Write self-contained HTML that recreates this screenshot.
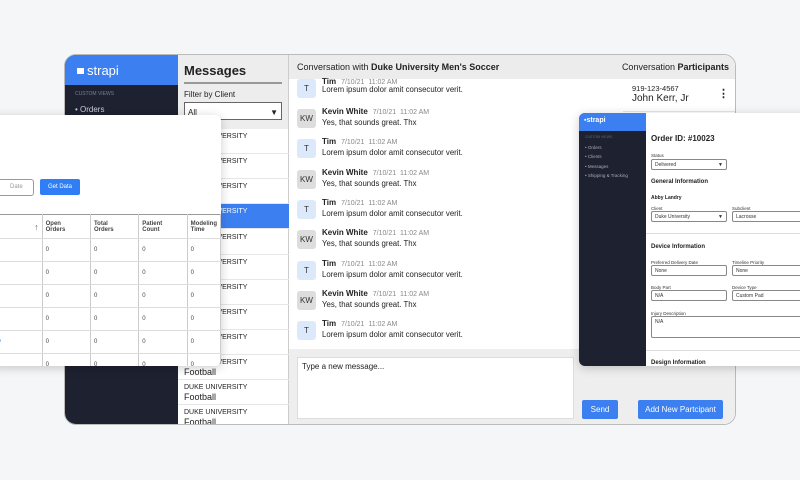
<!DOCTYPE html>
<html><head><style>
*{box-sizing:border-box;margin:0;padding:0}
body{width:800px;height:480px;background:#f5f6f8;font-family:"Liberation Sans",sans-serif;position:relative;overflow:hidden;color:#222}
.abs{position:absolute}
.win{left:64px;top:54px;width:672px;height:371px;border:1px solid #bbb;border-radius:12px;overflow:hidden;background:#fff}
.side{left:0;top:0;width:113px;height:371px;background:#1e2130}
.side .logo{height:30px;background:#3b7ff0;color:#fff;font-size:13px;padding:8px 12px}
.msgs{left:113px;top:0;width:111px;height:371px;background:#fff;border-right:1px solid #ccc}
.it{position:absolute;left:0;width:111px;height:25px;border-bottom:1px solid #e6e6e6;padding:3px 6px;font-size:7px;line-height:9px}
.it b{display:block;font-weight:normal;font-size:9px;line-height:11px}
.conv{left:224px;top:0;width:448px;height:371px;background:#fff}
.m{position:absolute;left:8px;font-size:8px}
.av{position:absolute;left:0;top:0;width:19px;height:19px;border-radius:3px;font-size:8px;text-align:center;line-height:19px}
.t{background:#dbe9fb;color:#333}.k{background:#ddd;color:#333}
.m .n{position:absolute;left:25px;top:-2px;white-space:nowrap;font-size:8px}
.m .n span{color:#888;font-size:7px;margin-left:5px}
.m .x{position:absolute;left:25px;top:9px;white-space:nowrap;font-size:7.8px}
.card{background:#fff;box-shadow:0 2px 10px rgba(0,0,0,.2);border-radius:6px;overflow:hidden}
td{border-right:1px solid #ccc;border-bottom:1px solid #ddd;font-size:6px;padding:0 3px;color:#444}
.in{position:absolute;border:1px solid #888;border-radius:2px;height:11px;font-size:5px;padding:2px 3px;color:#333}
.lb{position:absolute;font-size:4.5px;color:#333}
.sq{display:inline-block;width:7px;height:6px;background:#fff;margin-right:3px;vertical-align:1px}
</style></head><body>
<div class="abs win">
 <div class="abs side"><div class="logo"><span class="sq"></span>strapi</div>
  <div style="color:#7a7f8e;font-size:5px;padding:6px 10px">CUSTOM VIEWS</div>
  <div style="color:#ccd;font-size:8px;padding:2px 10px">• Orders</div></div>
 <div class="abs msgs">
  <div style="background:#ededed;height:74px;padding:8px 6px">
   <div style="font-size:13px;font-weight:bold;border-bottom:2px solid #999;padding-bottom:4px">Messages</div>
   <div style="font-size:8px;margin-top:6px">Filter by Client</div>
   <div style="background:#fff;border:1px solid #666;height:18px;margin-top:3px;font-size:8px;padding:5px 3px">All<span style="float:right">▼</span></div>
  </div>
  <div class="it" style="top:74px">DUKE UNIVERSITY<b>Soccer</b></div>
  <div class="it" style="top:99px">DUKE UNIVERSITY<b>Soccer</b></div>
  <div class="it" style="top:124px">DUKE UNIVERSITY<b>Soccer</b></div>
  <div class="it" style="top:149px;background:#3b7ff0;color:#fff">DUKE UNIVERSITY<b>Soccer</b></div>
  <div class="it" style="top:175px">DUKE UNIVERSITY<b>Hockey</b></div>
  <div class="it" style="top:200px">DUKE UNIVERSITY<b>Football</b></div>
  <div class="it" style="top:225px">DUKE UNIVERSITY<b>Football</b></div>
  <div class="it" style="top:250px">DUKE UNIVERSITY<b>Football</b></div>
  <div class="it" style="top:275px">DUKE UNIVERSITY<b>Football</b></div>
  <div class="it" style="top:300px">DUKE UNIVERSITY<b>Football</b></div>
  <div class="it" style="top:325px">DUKE UNIVERSITY<b>Football</b></div>
  <div class="it" style="top:350px">DUKE UNIVERSITY<b>Football</b></div>
 </div>
 <div class="abs conv">
  <div style="height:24px;background:#ececec;font-size:9px;padding:7px 8px">Conversation with <b>Duke University Men's Soccer</b><span style="float:right">Conversation <b>Participants</b></span></div>
  <div class="m" style="top:24px"><div class="av t">T</div><div class="n"><b>Tim</b><span>7/10/21 &nbsp;11:02 AM</span></div><div class="x" style="top:6px">Lorem ipsum dolor amit consecutor verit.</div></div>
  <div class="m" style="top:54px"><div class="av k">KW</div><div class="n"><b>Kevin White</b><span>7/10/21 &nbsp;11:02 AM</span></div><div class="x">Yes, that sounds great. Thx</div></div>
  <div class="m" style="top:84px"><div class="av t">T</div><div class="n"><b>Tim</b><span>7/10/21 &nbsp;11:02 AM</span></div><div class="x">Lorem ipsum dolor amit consecutor verit.</div></div>
  <div class="m" style="top:115px"><div class="av k">KW</div><div class="n"><b>Kevin White</b><span>7/10/21 &nbsp;11:02 AM</span></div><div class="x">Yes, that sounds great. Thx</div></div>
  <div class="m" style="top:145px"><div class="av t">T</div><div class="n"><b>Tim</b><span>7/10/21 &nbsp;11:02 AM</span></div><div class="x">Lorem ipsum dolor amit consecutor verit.</div></div>
  <div class="m" style="top:175px"><div class="av k">KW</div><div class="n"><b>Kevin White</b><span>7/10/21 &nbsp;11:02 AM</span></div><div class="x">Yes, that sounds great. Thx</div></div>
  <div class="m" style="top:206px"><div class="av t">T</div><div class="n"><b>Tim</b><span>7/10/21 &nbsp;11:02 AM</span></div><div class="x">Lorem ipsum dolor amit consecutor verit.</div></div>
  <div class="m" style="top:236px"><div class="av k">KW</div><div class="n"><b>Kevin White</b><span>7/10/21 &nbsp;11:02 AM</span></div><div class="x">Yes, that sounds great. Thx</div></div>
  <div class="m" style="top:266px"><div class="av t">T</div><div class="n"><b>Tim</b><span>7/10/21 &nbsp;11:02 AM</span></div><div class="x">Lorem ipsum dolor amit consecutor verit.</div></div>
  <div class="abs" style="left:334px;top:24px;width:114px;height:270px;background:#fff">
   <div style="font-size:7.5px;padding:5px 9px;border-bottom:1px solid #e6e6e6;height:33px">919-123-4567<br><span style="font-size:10px">John Kerr, Jr</span><span style="position:absolute;right:8px;top:8px;font-weight:bold;font-size:11px">⋮</span></div>
   <div style="font-size:7.5px;padding:4px 9px">919-123-4567</div>
  </div>
  <div class="abs" style="left:0;top:294px;width:448px;height:77px;background:#eee"></div>
  <div class="abs" style="left:8px;top:302px;width:277px;height:62px;background:#fff;border:1px solid #ddd;font-size:8px;padding:4px">Type a new message...</div>
  <div class="abs" style="left:293px;top:345px;width:36px;height:19px;background:#3b7ff0;color:#fff;font-size:8px;text-align:center;line-height:19px;border-radius:2px">Send</div>
  <div class="abs" style="left:349px;top:345px;width:85px;height:19px;background:#3b7ff0;color:#fff;font-size:8px;text-align:center;line-height:19px;border-radius:2px">Add New Partcipant</div>
 </div>
</div>

<!-- left overlay -->
<div class="abs card" style="left:-8px;top:115px;width:229px;height:251px">
 <div class="abs" style="left:0;top:64px;width:42px;height:17px;border:1px solid #999;border-radius:3px;font-size:6px;color:#999;padding:4px 8px 0 17px">Date</div>
 <div class="abs" style="left:48px;top:64px;width:40px;height:16px;background:#2f7ef5;border-radius:2px;color:#fff;font-size:6px;text-align:center;line-height:16px">Get Data</div>
 <table class="abs" style="left:0;top:99px;width:229px;border-collapse:collapse;border-top:1px solid #999">
  <tr style="height:24px;border-bottom:1px solid #999"><td style="width:53px;text-align:right;font-size:9px;color:#666">↑</td><td style="width:50px"><b>Open<br>Orders</b></td><td style="width:50px"><b>Total<br>Orders</b></td><td style="width:50px"><b>Patient<br>Count</b></td><td><b>Modeling<br>Time</b></td></tr>
  <tr style="height:23px"><td></td><td>0</td><td>0</td><td>0</td><td>0</td></tr>
  <tr style="height:23px"><td></td><td>0</td><td>0</td><td>0</td><td>0</td></tr>
  <tr style="height:23px"><td></td><td>0</td><td>0</td><td>0</td><td>0</td></tr>
  <tr style="height:23px"><td></td><td>0</td><td>0</td><td>0</td><td>0</td></tr>
  <tr style="height:23px"><td style="color:#2f7ef5">ity</td><td>0</td><td>0</td><td>0</td><td>0</td></tr>
  <tr style="height:23px"><td></td><td>0</td><td>0</td><td>0</td><td>0</td></tr>
 </table>
</div>

<!-- right overlay -->
<div class="abs card" style="left:579px;top:113px;width:230px;height:253px">
 <div class="abs" style="left:0;top:0;width:67px;height:253px;background:#1e2130">
  <div style="height:18px;background:#3b7ff0;color:#fff;font-size:7px;font-weight:bold;padding:4px 5px">▪strapi</div>
  <div style="font-size:3.5px;color:#666;padding:4px 6px">CUSTOM VIEWS</div>
  <div style="font-size:4.5px;color:#aab;padding:0 6px;line-height:9.3px">• Orders<br>• Clients<br>• Messages<br>• Shipping &amp; Tracking</div>
 </div>
 <div class="abs" style="left:72px;top:21px;font-size:8px;font-weight:bold">Order ID: #10023</div>
 <div class="lb" style="left:72px;top:40px">Status</div>
 <div class="in" style="left:72px;top:46px;width:76px">Delivered<span style="float:right">▼</span></div>
 <div class="abs" style="left:72px;top:66px;font-size:6px;font-weight:bold">General Information</div>
 <div class="abs" style="left:72px;top:82px;font-size:5px;font-weight:bold">Abby Landry</div>
 <div class="lb" style="left:72px;top:93px">Client</div>
 <div class="in" style="left:72px;top:98px;width:76px">Duke University<span style="float:right">▼</span></div>
 <div class="lb" style="left:153px;top:93px">Subclient</div>
 <div class="in" style="left:153px;top:98px;width:80px">Lacrosse</div>
 <div class="abs" style="left:67px;top:120px;width:170px;border-top:1px solid #ddd"></div>
 <div class="abs" style="left:72px;top:131px;font-size:6px;font-weight:bold">Device Information</div>
 <div class="lb" style="left:72px;top:147px">Preferred Delivery Date</div>
 <div class="in" style="left:72px;top:152px;width:76px">None</div>
 <div class="lb" style="left:153px;top:147px">Timeline Priority</div>
 <div class="in" style="left:153px;top:152px;width:80px">None</div>
 <div class="lb" style="left:72px;top:172px">Body Part</div>
 <div class="in" style="left:72px;top:177px;width:76px">N/A</div>
 <div class="lb" style="left:153px;top:172px">Device Type</div>
 <div class="in" style="left:153px;top:177px;width:80px">Custom Pad</div>
 <div class="lb" style="left:72px;top:198px">Injury Description</div>
 <div class="in" style="left:72px;top:203px;width:165px;height:22px">N/A</div>
 <div class="abs" style="left:67px;top:237px;width:170px;border-top:1px solid #ddd"></div>
 <div class="abs" style="left:72px;top:247px;font-size:6px;font-weight:bold">Design Information</div>
</div>
</body></html>
